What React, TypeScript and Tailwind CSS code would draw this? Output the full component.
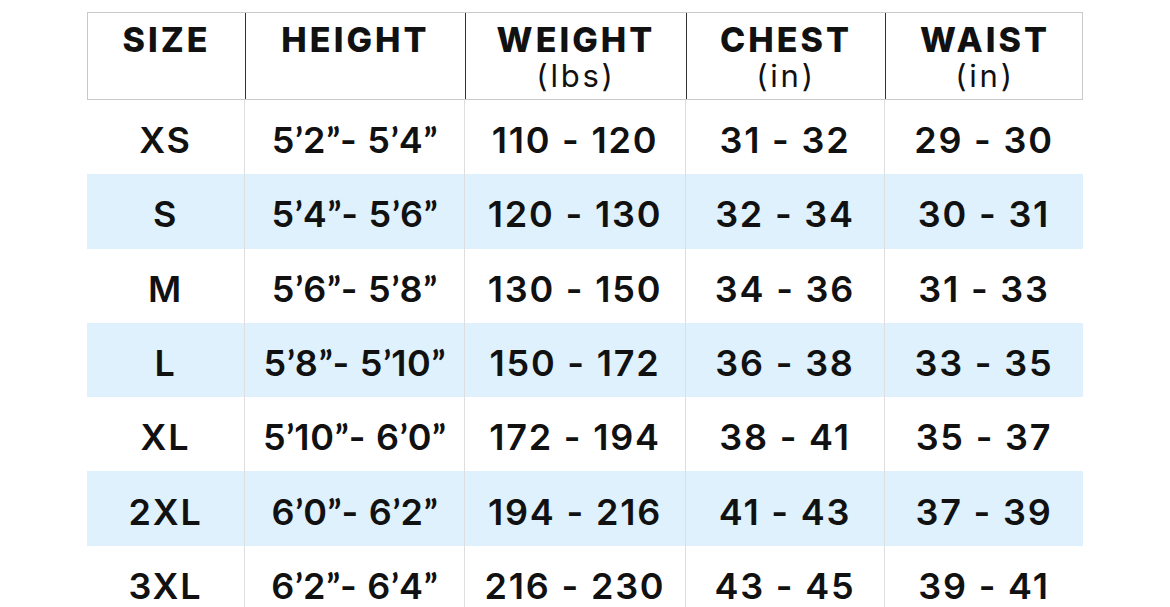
import React from "react";

const headers = [
  { title: "SIZE" },
  { title: "HEIGHT" },
  { title: "WEIGHT", unit: "(lbs)" },
  { title: "CHEST", unit: "(in)" },
  { title: "WAIST", unit: "(in)" },
];

const rows = [
  ["XS", "5’2”- 5’4”", "110 - 120", "31 - 32", "29 - 30"],
  ["S", "5’4”- 5’6”", "120 - 130", "32 - 34", "30 - 31"],
  ["M", "5’6”- 5’8”", "130 - 150", "34 - 36", "31 - 33"],
  ["L", "5’8”- 5’10”", "150 - 172", "36 - 38", "33 - 35"],
  ["XL", "5’10”- 6’0”", "172 - 194", "38 - 41", "35 - 37"],
  ["2XL", "6’0”- 6’2”", "194 - 216", "41 - 43", "37 - 39"],
  ["3XL", "6’2”- 6’4”", "216 - 230", "43 - 45", "39 - 41"],
];

const cols = "grid grid-cols-[157px_220px_221px_199px_199px]";

// curly quotes look closer in Lato than in Inter
function Quoted({ text }: { text: string }) {
  return (
    <>
      {text.split(/([’”])/).map((part, i) =>
        part === "’" || part === "”" ? (
          <span key={i} className="tracking-normal" style={{ fontFamily: "Lato, sans-serif", fontWeight: 700 }}>
            {part}
          </span>
        ) : (
          <span key={i}>{part}</span>
        )
      )}
    </>
  );
}

export default function App() {
  return (
    <div
      className="w-[1170px] h-[607px] overflow-hidden bg-white text-[#111]"
      style={{ fontFamily: "Inter, 'Liberation Sans', sans-serif" }}
    >
      <div className="ml-[87px] mt-[12px] w-[996px]">
        {/* header */}
        <div className={`${cols} h-[88px] border border-[#c9c9c9]`}>
          {headers.map((h, i) => (
            <div
              key={h.title}
              className={`flex flex-col items-center pt-[9px] ${i > 0 ? "border-l-[1.5px] border-[#333]" : ""}`}
            >
              <div className="text-[34px] leading-[36px] font-extrabold tracking-[0.09em]">{h.title}</div>
              {h.unit && (
                <div className="text-[31px] leading-[34px] font-normal tracking-[0.09em] mt-[1px]">{h.unit}</div>
              )}
            </div>
          ))}
        </div>
        {/* body */}
        {rows.map((r, ri) => (
          <div key={r[0]} className={`${cols} h-[74.3px] ${ri % 2 === 1 ? "bg-[#def1fc]" : "bg-white"}`}>
            {r.map((c, ci) => (
              <div
                key={ci}
                className={`flex items-center justify-center pt-[6px] text-[36px] font-semibold whitespace-nowrap ${
                  ci === 1 ? "tracking-[0.02em]" : "tracking-[0.05em]"
                } ${ci > 0 ? "border-l border-[#dedede]" : ""}`}
              >
                {ci === 1 ? <Quoted text={c} /> : c}
              </div>
            ))}
          </div>
        ))}
      </div>
    </div>
  );
}
